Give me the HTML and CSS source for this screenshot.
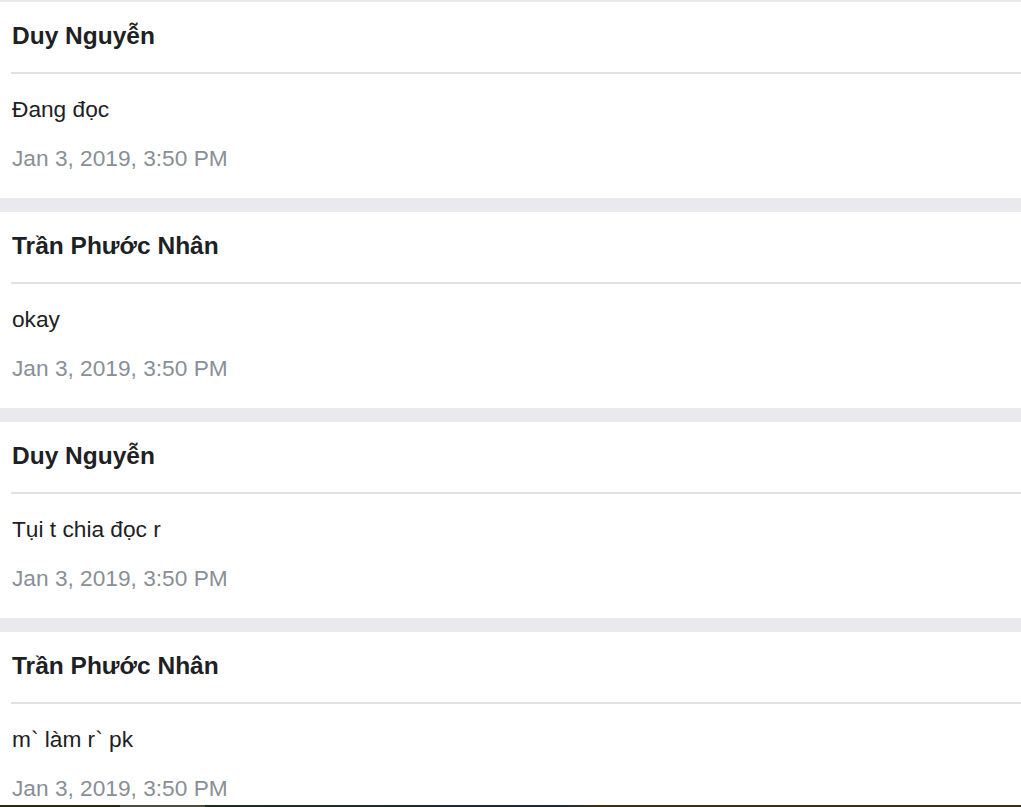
FILE: index.html
```html
<!DOCTYPE html>
<html lang="vi">
<head>
<meta charset="utf-8">
<title>Messages</title>
<link rel="stylesheet" href="styles.css">
</head>
<body>
  <div class="list">
    <div class="card">
      <h5 class="name">Duy Nguyễn</h5>
      <div class="rule"></div>
      <p class="text">Đang đọc</p>
      <p class="date">Jan 3, 2019, 3:50 PM</p>
    </div>
    <div class="card">
      <h5 class="name">Trần Phước Nhân</h5>
      <div class="rule"></div>
      <p class="text">okay</p>
      <p class="date">Jan 3, 2019, 3:50 PM</p>
    </div>
    <div class="card">
      <h5 class="name">Duy Nguyễn</h5>
      <div class="rule"></div>
      <p class="text">Tụi t chia đọc r</p>
      <p class="date">Jan 3, 2019, 3:50 PM</p>
    </div>
    <div class="card">
      <h5 class="name">Trần Phước Nhân</h5>
      <div class="rule"></div>
      <p class="text">m` làm r` pk</p>
      <p class="date">Jan 3, 2019, 3:50 PM</p>
    </div>
  </div>
  <div class="bottom-strip"></div>
</body>
</html>
```

FILE: styles.css
```css
html, body {
  margin: 0;
  padding: 0;
  background: #e9e9ee;
  overflow: hidden;
}

body {
  font-family: "Liberation Sans", Arial, sans-serif;
  color: #212529;
}

.list {
  display: flex;
  flex-direction: column;
  gap: 14px;
  padding-top: 2px;
}

.card {
  background: #ffffff;
  height: 196px;
  box-sizing: border-box;
  padding: 19px 0 0 12px;
  display: flex;
  flex-direction: column;
}

.name {
  margin: 0;
  font-size: 24.5px;
  line-height: 29px;
  font-weight: 700;
  color: #1d2124;
}

.rule {
  height: 2px;
  background: #dfe1e4;
  margin: 22px 0 0 -1px;
}

.text {
  margin: 19px 0 0;
  font-size: 22.7px;
  line-height: 33px;
  color: #1d2124;
}

.date {
  margin: 16px 0 0;
  font-size: 22.7px;
  line-height: 33px;
  color: #888f97;
}

.bottom-strip {
  position: fixed;
  left: 0;
  right: 0;
  bottom: 0;
  height: 2px;
  background: linear-gradient(to right,
    #2c2b12 0, #2c2b12 120px,
    #4b4e3b 120px, #4b4e3b 205px,
    #1e2b1c 205px, #1f2a2a 400px,
    #1c2c35 480px, #1f2b33 560px,
    #3a3112 600px, #3a3112 100%);
}
```
